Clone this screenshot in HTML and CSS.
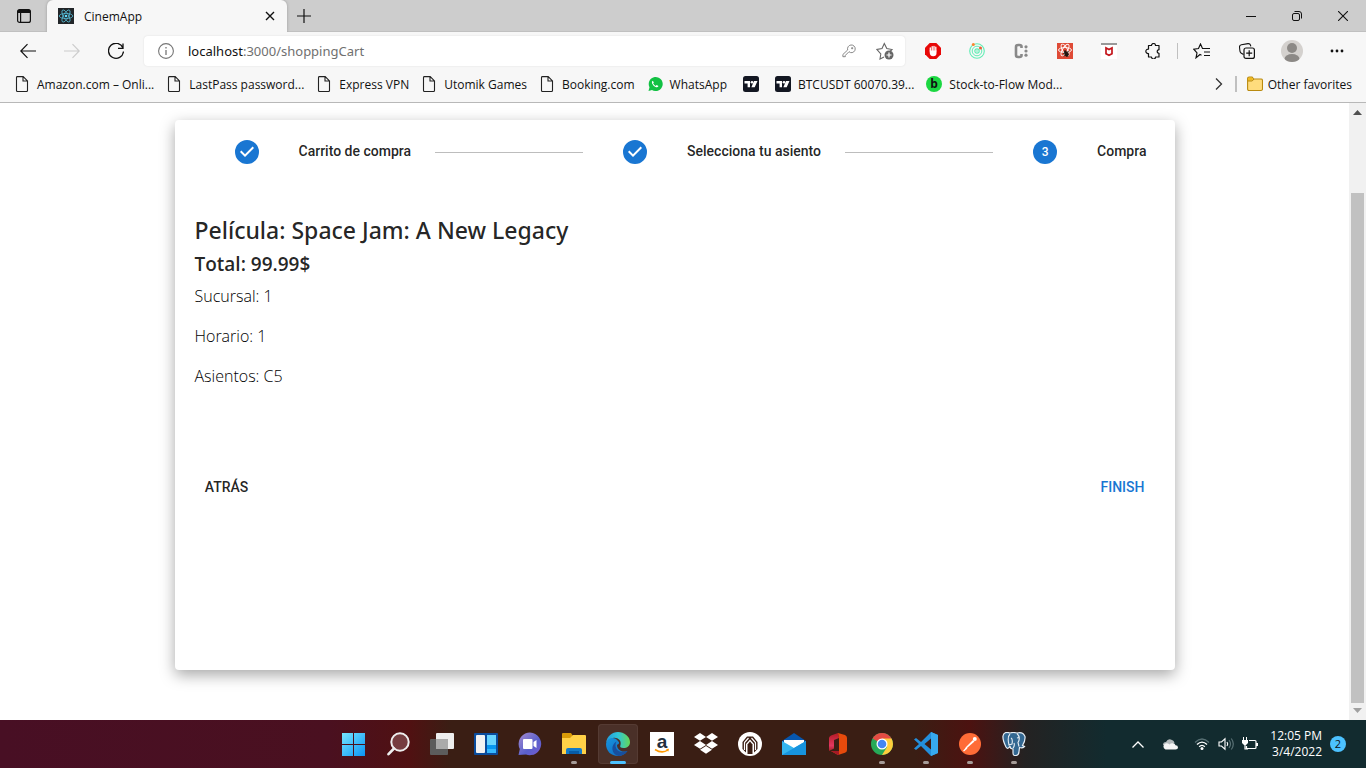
FILE: index.html
```html
<!DOCTYPE html>
<html lang="es">
<head>
<meta charset="utf-8">
<title>CinemApp</title>
<link rel="stylesheet" href="styles.css">
</head>
<body>
<svg class="defs" aria-hidden="true">
  <symbol id="page" viewBox="0 0 16 16"><path d="M2.500 .6h6.700l4.300 4.300v9.600q0 1-1 1h-9q-1 0-1-1V1.600q0-1 1-1zM9 .8V5h4.300" fill="none" stroke="#222" stroke-width="1.100"/></symbol>
  <symbol id="tv" viewBox="0 0 16 16"><rect width="16" height="16" rx="2.500" fill="#131722"/><path d="M1.500 5H7v6.200H4.600V7.400H1.500zM11 5h3.500l-2.800 6.200H8.400z" fill="#fff"/><circle cx="9" cy="6.300" r="1.300" fill="#fff"/></symbol>
  <symbol id="check" viewBox="0 0 24 24"><path d="M12 0a12 12 0 1 0 0 24 12 12 0 0 0 0-24zm-2 17l-5-5 1.400-1.400 3.600 3.600 7.600-7.600L19 8l-9 9z" fill="#1976d2"/></symbol>
</svg>
<div class="screen">
  <header class="browser">
    <div class="titlebar">
      <button class="tab-menu" aria-label="Tab actions"><svg width="16" height="16" viewBox="0 0 16 16"><path d="M1.600 5V3.500q0-2 2-2h8.800q2 0 2 2V5z" fill="#111"/><rect x="1.600" y="1.600" width="12.800" height="12.800" rx="2" fill="none" stroke="#111" stroke-width="1.200"/><path d="M4.600 5v9.500" stroke="#111" stroke-width="1.200"/></svg></button>
      <div class="tab">
        <svg width="16" height="16" viewBox="0 0 16 16"><rect width="16" height="16" fill="#222629"/><g fill="none" stroke="#55b9d3" stroke-width=".8"><ellipse cx="8" cy="8" rx="6.800" ry="2.600"/><ellipse cx="8" cy="8" rx="6.800" ry="2.600" transform="rotate(60 8 8)"/><ellipse cx="8" cy="8" rx="6.800" ry="2.600" transform="rotate(120 8 8)"/></g><circle cx="8" cy="8" r="1.300" fill="#61dafb"/></svg>
        <span class="tab-title">CinemApp</span>
        <button class="tab-close" aria-label="Close tab"><svg width="10" height="10" viewBox="0 0 10 10"><path d="M1 1l8 8M9 1L1 9" stroke="#111" stroke-width="1.400"/></svg></button>
      </div>
      <button class="new-tab" aria-label="New tab"><svg width="14" height="14" viewBox="0 0 14 14"><path d="M7 0v14M0 7h14" stroke="#111" stroke-width="1.200"/></svg></button>
      <div class="window-controls">
        <button aria-label="Minimize"><svg width="10" height="10"><path d="M0 5.500h10" stroke="#111"/></svg></button>
        <button aria-label="Restore"><svg width="10" height="10" viewBox="0 0 10 10"><rect x=".5" y="2.500" width="7" height="7" rx="1.500" fill="none" stroke="#111"/><path d="M2.500 .5H7q2.500 0 2.500 2.500v4.500" fill="none" stroke="#111"/></svg></button>
        <button aria-label="Close"><svg width="10" height="10"><path d="M0 0l10 10M10 0L0 10" stroke="#111" stroke-width="1.100"/></svg></button>
      </div>
    </div>
    <div class="toolbar">
      <nav class="history">
        <button aria-label="Back"><svg width="16" height="16" viewBox="0 0 16 16"><path d="M16 8H.8M7.500 1.200L.8 8l6.700 6.800" fill="none" stroke="#111" stroke-width="1.200"/></svg></button>
        <button aria-label="Forward" disabled><svg width="16" height="16" viewBox="0 0 16 16"><path d="M0 8h15.200M8.500 1.200L15.200 8l-6.700 6.800" fill="none" stroke="#ccc" stroke-width="1.200"/></svg></button>
        <button aria-label="Refresh"><svg width="16" height="16" viewBox="0 0 16 16"><path d="M15 5A7.500 7.500 0 1 0 15.500 8.500M15 .5V5.300h-5" fill="none" stroke="#111" stroke-width="1.300"/></svg></button>
      </nav>
      <div class="address">
        <svg width="16" height="16" viewBox="0 0 16 16"><circle cx="8" cy="8" r="7.400" fill="none" stroke="#767676" stroke-width="1.100"/><path d="M8 7v5M8 4v1.500" stroke="#767676" stroke-width="1.300"/></svg>
        <a class="url" href="#"><span class="host">localhost</span>:3000/shoppingCart</a>
        <button aria-label="Saved passwords"><svg width="14" height="14" viewBox="0 0 16 16"><path d="M8 8.800L3.800 13v1.500H1V12l5.500-5.200A4.400 4.400 0 1 1 9.700 9.800L8 8.800zM11 4.200h1.200v1.200H11z" fill="none" stroke="#777" stroke-width="1"/></svg></button>
        <button class="star" aria-label="Add to favorites"><svg width="18" height="18" viewBox="0 0 18 18"><path d="M8 15l-4 2 .8-5L1 7.500l5-.9L8.300 1.500l2.500 5.100 5.200.9-2 2" fill="none" stroke="#666" stroke-width="1.100"/><circle cx="13" cy="13" r="4.500" fill="#666"/><path d="M13 10.500v5M10.500 13h5" stroke="#fff" stroke-width="1.200"/></svg></button>
      </div>
      <div class="extensions">
        <button aria-label="Ad blocker"><svg width="16" height="16" viewBox="0 0 16 16"><path d="M4.700 0h6.600L16 4.700v6.600L11.300 16H4.700L0 11.300V4.700z" fill="#e80808"/><path d="M5.300 8V5M7.200 8V3.600M9 8V3.300M10.800 8V4.200" stroke="#fff" stroke-width="1.300" stroke-linecap="round"/><path d="M4.700 7.500h6.800v2.700q0 3-3.200 3-3.600 0-3.600-4z" fill="#fff"/></svg></button>
        <button aria-label="Orbit"><svg width="16" height="16" viewBox="0 0 16 16"><g fill="none" stroke="#61edb4"><circle cx="8" cy="8" r="7.300" stroke-width="1.100"/><circle cx="8" cy="8" r="4.800"/><circle cx="8" cy="8" r="2.200" stroke-width="1.200"/></g><circle cx="8" cy="8" r=".8" fill="#61edb4"/><circle cx="4.300" cy="1.600" r="1.500" fill="#ff852f"/><circle cx="11.500" cy="5" r="1.500" fill="#f05b37"/></svg></button>
        <button aria-label="Code tools"><svg width="16" height="16" viewBox="0 0 16 16"><path d="M8.500 5V3.500Q8.500 2 6.500 2H5Q3 2 3 4v8q0 2 2 2h1.500q2 0 2-1.500V11" fill="none" stroke="#898989" stroke-width="2.600"/><g fill="#898989"><circle cx="13" cy="3.800" r="1.600"/><circle cx="13" cy="8" r="1.600"/><circle cx="13" cy="12.200" r="1.600"/></g></svg></button>
        <button aria-label="React tools"><svg width="16" height="16" viewBox="0 0 16 16"><rect width="16" height="16" fill="#df4a36"/><g fill="none" stroke="#fff" stroke-width=".9"><ellipse cx="8" cy="7" rx="6.500" ry="2.500"/><ellipse cx="8" cy="7" rx="6.500" ry="2.500" transform="rotate(60 8 7)"/><ellipse cx="8" cy="7" rx="6.500" ry="2.500" transform="rotate(120 8 7)"/></g><path d="M7 7.500l2 .5 2.500 2v2.500L9.500 14 7.500 12z" fill="#22150f"/><path d="M6 10.500l6-2M6.500 13l5.500-1.500M8 7l3 7" stroke="#22150f" stroke-width=".8"/></svg></button>
        <button aria-label="Web protection"><svg width="16" height="16" viewBox="0 0 16 16"><rect y="1" width="16" height="15" fill="#fff"/><rect width="16" height="2" fill="#999"/><path d="M5 5v5.800l3 1.500 3-1.500V5L8 6.500z" fill="none" stroke="#c4161c" stroke-width="1.700"/></svg></button>
        <button aria-label="Extensions"><svg width="16" height="16" viewBox="0 0 16 16"><path d="M5 2.500h1.500a2 2 0 0 1 4 0H14v4.200a1.800 1.800 0 1 0 0 3.600V14h-3.500a2 2 0 0 1-4 0H3.500v-3.500a2.200 2.200 0 1 1 0-4.300V2.500z" fill="none" stroke="#111" stroke-width="1.200" stroke-linejoin="round"/></svg></button>
      </div>
      <span class="divider"></span>
      <div class="browser-tools">
        <button aria-label="Favorites"><svg width="17" height="16" viewBox="0 0 17 16"><path d="M8.500 12.300L7 11.500 3 14.800l1-5L.8 6.200l4.700-.7L7.500 1l2 4.500H17M11 9h6M11 12.500h6" fill="none" stroke="#111" stroke-width="1.150"/></svg></button>
        <button aria-label="Collections"><svg width="16" height="16" viewBox="0 0 16 16"><path d="M4.500 11.500L2 10Q.8 9 .8 7L.5 4Q.5 2 2.400 1.700L9 .6q2-.2 2.500 1.600l.3 1.200" fill="none" stroke="#111" stroke-width="1.100"/><rect x="5" y="5" width="10.400" height="10.400" rx="2" fill="#f7f7f7" stroke="#111" stroke-width="1.200"/><path d="M10.200 7.200v6M7.200 10.200h6" stroke="#111" stroke-width="1.200"/></svg></button>
        <button aria-label="Profile"><svg width="22" height="22" viewBox="0 0 22 22"><defs><clipPath id="face"><circle cx="11" cy="11" r="11"/></clipPath></defs><g clip-path="url(#face)"><rect width="22" height="22" fill="#d4d1ce"/><circle cx="11" cy="8" r="5" fill="#8c8986"/><ellipse cx="11" cy="19" rx="7.500" ry="5" fill="#8c8986"/></g></svg></button>
        <button aria-label="Settings and more"><svg width="14" height="4"><g fill="#111"><circle cx="2" cy="2" r="1.400"/><circle cx="7" cy="2" r="1.400"/><circle cx="12" cy="2" r="1.400"/></g></svg></button>
      </div>
    </div>
    <nav class="bookmarks">
      <a href="#"><svg><use href="#page"/></svg>Amazon.com – Onli...</a>
      <a href="#"><svg><use href="#page"/></svg>LastPass password...</a>
      <a href="#"><svg><use href="#page"/></svg>Express VPN</a>
      <a href="#"><svg><use href="#page"/></svg>Utomik Games</a>
      <a href="#"><svg><use href="#page"/></svg>Booking.com</a>
      <a href="#"><svg viewBox="0 0 16 16"><path d="M1.500 15l1-3.700A7 7 0 1 1 5 14z" fill="#12c143"/><path d="M5.800 4.700q-1.500.8-.7 2.700 1.300 3 4 3.800 1.700.4 2.400-1.300l-1.900-1-1 1Q6.800 9 6.100 7.300l.8-.9z" fill="#fff"/></svg>WhatsApp</a>
      <a class="icon-only" href="#" aria-label="TradingView"><svg><use href="#tv"/></svg></a>
      <a href="#"><svg><use href="#tv"/></svg>BTCUSDT 60070.39...</a>
      <a href="#"><svg viewBox="0 0 16 16"><circle cx="8" cy="8" r="8" fill="#1bd741"/><text x="8" y="12" text-anchor="middle" class="b-mark">b</text></svg>Stock-to-Flow Mod...</a>
      <button class="more" aria-label="More favorites"><svg width="8" height="12" viewBox="0 0 8 12"><path d="M1 .5L6.500 6 1 11.500" fill="none" stroke="#333" stroke-width="1.300"/></svg></button>
      <span class="divider"></span>
      <a class="folder" href="#"><svg viewBox="0 0 16 16"><path d="M.6 4V2.600q0-1.500 1.500-1.500h3L6.800 3H14q1.500 0 1.500 1.500V13q0 1.500-1.500 1.500H2Q.6 14.500.6 13z" fill="#ffdc7d" stroke="#b98a10" stroke-width="1.100"/><path d="M1 5V2.700q0-1.200 1.200-1.200h2.700L6.400 3 5 4.600z" fill="#efb920"/><path d="M1 5h4.200L7 3" fill="none" stroke="#b98a10"/></svg>Other favorites</a>
    </nav>
  </header>

  <div class="viewport">
    <main class="page">
      <section class="card">
        <ol class="stepper">
          <li><svg width="24" height="24"><use href="#check"/></svg><span>Carrito de compra</span></li>
          <li class="line" aria-hidden="true"></li>
          <li><svg width="24" height="24"><use href="#check"/></svg><span>Selecciona tu asiento</span></li>
          <li class="line" aria-hidden="true"></li>
          <li><b class="number">3</b><span>Compra</span></li>
        </ol>
        <div class="summary">
          <h1>Película: Space Jam: A New Legacy</h1>
          <h2>Total: 99.99$</h2>
          <p>Sucursal: 1</p>
          <p>Horario: 1</p>
          <p>Asientos: C5</p>
        </div>
        <div class="actions">
          <button>ATRÁS</button>
          <button class="primary">FINISH</button>
        </div>
      </section>
    </main>
    <div class="scrollbar" aria-hidden="true">
      <svg width="9" height="5"><path d="M0 5L4.500 0 9 5z" fill="#505050"/></svg>
      <span class="thumb"></span>
      <svg width="9" height="5"><path d="M0 0h9L4.500 5z" fill="#a0a0a0"/></svg>
    </div>
  </div>

  <footer class="taskbar">
    <div class="apps">
      <button aria-label="Start"><svg viewBox="0 0 24 24"><defs><linearGradient id="win" x2="1" y2="1"><stop stop-color="#76e6ff"/><stop offset="1" stop-color="#0a94f5"/></linearGradient></defs><path d="M0 1h11v11H0zM12 1h11v11H12zM0 13h11v11H0zM12 13h11v11H12z" fill="url(#win)"/></svg></button>
      <button aria-label="Search"><svg viewBox="0 0 24 24"><circle cx="14" cy="10" r="8.700" fill="#763d40" stroke="#eee" stroke-width="2"/><path d="M8 16.500l-5.500 5.700" stroke="#eee" stroke-width="2.600" stroke-linecap="round"/></svg></button>
      <button aria-label="Task view"><svg viewBox="0 0 24 24"><rect x="6" y="1" width="18" height="16" rx="1" fill="#eee"/><rect y="7" width="18" height="16" rx="1" fill="#5c5c5c"/><path d="M6 7h12v10H6z" fill="#aaa"/></svg></button>
      <button aria-label="Widgets"><svg viewBox="0 0 24 24"><rect y="1" width="24" height="22" rx="1" fill="#0a4c9d"/><rect x="2" y="3" width="9" height="18" rx="1" fill="#f2f2f2"/><path d="M13 3h9v10h-9z" fill="#68d4ff"/><path d="M13 13h9v4h-9z" fill="#0797f2"/><path d="M13 17h9v4h-9z" fill="#36b9ff"/></svg></button>
      <button aria-label="Chat"><svg viewBox="0 0 24 24"><defs><linearGradient id="chat" x2="1" y2="1"><stop stop-color="#a58bd0"/><stop offset=".6" stop-color="#5960cc"/><stop offset="1" stop-color="#775bd0"/></linearGradient></defs><path d="M.5 23l1.300-6A11.300 11.300 0 1 1 8 22.500z" fill="url(#chat)"/><rect x="5" y="7" width="9.500" height="10" rx="1" fill="#fff"/><path d="M15.500 10L18.500 8v8l-3-2z" fill="#fff"/></svg></button>
      <button class="running" aria-label="File Explorer"><svg viewBox="0 0 24 24"><path d="M0 2q0-1 1-1h8l2 3v4H0z" fill="#d99b08"/><path d="M0 6h8l3-3h12q1 0 1 1v18H0z" fill="#ffd147"/><path d="M4 22v-4q0-2 2-2h12q2 0 2 2v4z" fill="#137ac7"/><path d="M7 19h10v3H7z" fill="#075ca7"/></svg></button>
      <button class="running active" aria-label="Edge"><svg viewBox="0 0 24 24"><defs><linearGradient id="edge" x2="1"><stop stop-color="#229bdc"/><stop offset=".5" stop-color="#2fc5d8"/><stop offset="1" stop-color="#65d955"/></linearGradient><linearGradient id="wave" x2=".8" y2="1"><stop stop-color="#1594df"/><stop offset="1" stop-color="#126cc0"/></linearGradient></defs><path d="M0 11C1 4 6 0 12 0s12 4.500 12 10c0 4-3 6-6.500 6-3 0-4-1.300-3-3C16 8 11 5 7 6 3 7 1 9 0 11z" fill="url(#edge)"/><path d="M0 12c1-7 9-8 12-3 2 2 1 3-1 4 0 4 4 8 10.500 6C19 22.500 15.500 24 12 24 5 24 0 19 0 12z" fill="url(#wave)"/><path d="M10.500 9.500c-2.500 4.500 0 10 5 10.500 3 .2 4.500-.5 6-1.200C19 22.500 16 24 12.500 24 5 22 4.500 13 10.500 9.500z" fill="#174f9e"/></svg></button>
      <button aria-label="Amazon"><svg viewBox="0 0 24 24"><rect width="24" height="24" fill="#fff"/><text x="12" y="16" text-anchor="middle" class="a-mark">a</text><path d="M5 17.500q7 4.500 13 .5" fill="none" stroke="#ff9900" stroke-width="1.500"/><path d="M16 17l3-.2-.8 3z" fill="#ff9900"/></svg></button>
      <button aria-label="Dropbox"><svg viewBox="0 0 24 24"><path d="M6 1l6 3.900-6 3.900-6-3.900zM18 1l6 3.900-6 3.900-6-3.900zM6 9l6 3.900-6 3.900-6-3.900zM18 9l6 3.900-6 3.900-6-3.900zM12 14l6 3.800-6 3.900-6-3.900z" fill="#fff"/></svg></button>
      <button aria-label="Nord"><svg viewBox="0 0 24 24"><circle cx="12" cy="12" r="12" fill="#fff"/><path d="M9 4.500h6l4.500 5.500v7L16 20.500V12l-4-4.500L8 12v8.500L4.500 17v-7z" fill="#3a1e14"/><path d="M6.500 18v-7.500L10.500 6M17.500 18v-7.500L13.500 6" fill="none" stroke="#fff" stroke-width="1.200"/><path d="M9.500 22v-9.500L12 9.500l2.500 3V22z" fill="#3a1e14"/></svg></button>
      <button aria-label="Mail"><svg viewBox="0 0 24 24"><path d="M0 9L12 1l12 8v5H0z" fill="#0756ad"/><path d="M2 8h20v9H2z" fill="#fff"/><path d="M0 9l12 7 12-7v14H0z" fill="#35b5ef"/><path d="M0 23L24 9v14z" fill="#1794df"/></svg></button>
      <button aria-label="Office"><svg viewBox="0 0 24 24"><defs><linearGradient id="office" y2="1" x2="0"><stop stop-color="#b31a24"/><stop offset=".7" stop-color="#e03860"/><stop offset="1" stop-color="#a32025"/></linearGradient></defs><path d="M12 1L5 3.500Q3 4.500 3 6v13l5-2.500V8l5-2z" fill="url(#office)"/><path d="M12 1l7 2q2 .8 2 3v12q0 2-2 2.800L12 23l-7-4h8V6z" fill="#e64a0c"/><path d="M5 19h8v4h-1z" fill="#a51a27"/></svg></button>
      <button class="running" aria-label="Chrome"><svg viewBox="0 0 24 24"><circle cx="12" cy="12" r="11" fill="#26a958"/><path d="M12 12L2.500 6.500A11 11 0 0 1 21.500 6.500z" fill="#e44b43"/><path d="M12 6.500h9.500A11 11 0 0 1 12 23l5-8z" fill="#ffcd3c"/><circle cx="12" cy="12" r="5.500" fill="#fff"/><circle cx="12" cy="12" r="4.300" fill="#4285f4"/></svg></button>
      <button class="running" aria-label="Visual Studio Code"><svg viewBox="0 0 24 24"><path d="M17 0l7 3v18l-7 3L7 14l-5 4-2-1.500L5 12 0 7.500 2 6l5 4zM17 6.500L10.500 12l6.500 5.500z" fill="#238fdc"/><path d="M17 0l7 3v18l-7 3z" fill="#37a9ef"/></svg></button>
      <button class="running" aria-label="Postman"><svg viewBox="0 0 24 24"><circle cx="12" cy="12" r="11" fill="#ff6c37"/><path d="M8 15l7-7 1.500 1.500L9 16l-3 2z" fill="#fff"/><circle cx="16.800" cy="7" r="2" fill="#fff"/><path d="M5.500 19l3.500-3" stroke="#fff" stroke-width="1.200"/></svg></button>
      <button class="running" aria-label="PostgreSQL"><svg viewBox="0 0 24 24"><path d="M8 1Q2-1 1 4q-.5 4 3 11 2 3 4-1 0 3 3 3v4q0 3 3 2.500t3-4l.5-4q3 1 5-1l-2-1q3-5 2.500-9Q21-.5 15 1q-4-1-7 0z" fill="#336791" stroke="#e6edf4" stroke-width="1.200"/><path d="M8 2Q5 5 7 13l3-1q1-5-1-6M15 1.500q4 4 1 9l1 4M11 16q2-2 1-5M15 6l2-.5" fill="none" stroke="#e6edf4" stroke-width="1.100"/></svg></button>
    </div>
    <div class="tray">
      <button aria-label="Show hidden icons"><svg width="12" height="7"><path d="M.5 6.500L6 1l5.500 5.500" fill="none" stroke="#fff" stroke-width="1.300"/></svg></button>
      <button class="cloud" aria-label="OneDrive"><svg width="16" height="11" viewBox="0 0 16 11"><path d="M1 6Q1 3 4 3q2-4 6-2 2 .5 2.500 3L7 7z" fill="#b3b9bb"/><path d="M3.500 10.500a3.200 3.200 0 0 1 0-6q2-.8 4 1 1-1.500 3.500-1.300 2 .2 2.500 2 2.500 0 2.500 2.200 0 2.100-2.500 2.100z" fill="#f5f5f5"/></svg></button>
      <button class="system" aria-label="Network, volume and battery">
        <svg width="16" height="14" viewBox="0 0 16 14"><path d="M1 5.500Q8-1.500 15 5.500" fill="none" stroke="#587074" stroke-width="1.200"/><path d="M3 7.600q5-5 10 0M5.200 9.800q2.800-2.800 5.600 0" fill="none" stroke="#fff" stroke-width="1.400"/><circle cx="8" cy="11.500" r="1.500" fill="#fff"/></svg>
        <svg width="16" height="14" viewBox="0 0 16 14"><path d="M1 5h2.500L7 1.800v10.400L3.500 9H1z" fill="none" stroke="#fff" stroke-width="1.100"/><path d="M9 5q1.500 2 0 4" fill="none" stroke="#fff" stroke-width="1.200"/><path d="M11 3.200q3 3.800 0 7.600M13.300 1.500q4 5.500 0 11" fill="none" stroke="#587074" stroke-width="1.200"/></svg>
        <svg width="16" height="14" viewBox="0 0 16 14"><path d="M7 3.500h6q1 0 1 1v6q0 1-1 1H4.500V9M3 6v6h3" fill="none" stroke="#fff" stroke-width="1.200"/><path d="M14 6h2v3h-2zM0 3h6v3L4 8H2L0 6zM1 0h1v3H1zM4 0h1v3H4z" fill="#fff"/></svg>
      </button>
      <button class="clock"><span class="time">12:05 PM<br>3/4/2022</span><span class="count">2</span></button>
    </div>
  </footer>
</div>
</body>
</html>
```
FILE: styles.css
```css
* { box-sizing: border-box; }
body { margin: 0; font-family: "Open Sans", "Noto Sans", sans-serif; font-size: 12px; color: #111; }
button { border: 0; margin: 0; padding: 0; background: none; color: inherit; font: inherit; display: flex; align-items: center; justify-content: center; }
a { color: inherit; text-decoration: none; }
svg { display: block; flex: none; }
.defs { position: absolute; width: 0; height: 0; }
.screen { min-height: 100vh; display: flex; flex-direction: column; background: #fff; }

.browser { background: #f7f7f7; border-bottom: 1px solid #b8b8b8; }
.titlebar { display: flex; height: 32px; background: #cdcdcd; border-bottom: 1px solid #c0c0c0; }
.tab-menu { width: 47px; }
.tab { display: flex; align-items: center; gap: 10px; width: 240px; height: 32px; padding: 0 11px; background: #f7f7f7; border-radius: 6px 6px 0 0; box-shadow: 0 0 3px #999; clip-path: inset(0 -4px 0 -4px); }
.tab-title { flex: 1; }
.tab-close { width: 12px; height: 20px; }
.new-tab { width: 34px; }
.window-controls { display: flex; margin-left: auto; }
.window-controls button { width: 46px; }

.toolbar { display: flex; align-items: center; height: 38px; }
.history { display: flex; padding-left: 6px; width: 144px; }
.history button { width: 44px; height: 32px; }
.address { flex: 1; display: flex; align-items: center; height: 30px; padding: 0 11px 0 14px; gap: 14px; background: #fff; border-radius: 4px; box-shadow: 0 0 2px #ddd; }
.url { flex: 1; color: #707070; font-family: "Noto Sans", sans-serif; font-size: 13px; }
.host { color: #111; }
.star { margin-left: 6px; }
.extensions { display: flex; padding-left: 6px; }
.extensions button { width: 44px; height: 32px; }
.divider { width: 1px; height: 16px; background: #c0c0c0; }
.toolbar .divider { margin-left: 2px; }
.browser-tools { display: flex; padding-left: 1px; padding-right: 7px; }
.browser-tools button { width: 45px; height: 32px; }

.bookmarks { display: flex; align-items: center; height: 32px; padding: 0 14px 4px; gap: 12px; white-space: nowrap; }
.bookmarks a { display: flex; align-items: center; gap: 7px; }
.bookmarks .icon-only { padding: 0 4px; }
.bookmarks a svg { width: 16px; height: 16px; }
.bookmarks .more { margin-left: auto; width: 8px; }
.bookmarks .divider { width: 2px; }
.bookmarks .folder { margin-left: -2px; gap: 5px; }
.b-mark { font: 700 12px "Open Sans", sans-serif; fill: #111; }

.viewport { flex: 1; display: flex; }
.page { flex: 1; padding: 17px 24px 50px; }
.card { max-width: 1000px; min-height: 550px; margin: 0 auto; padding: 20px; border-radius: 4px; background: #fff; color: rgba(0, 0, 0, .87); box-shadow: 0 5px 15px rgba(0, 0, 0, .35); }
.stepper { display: flex; align-items: center; list-style: none; margin: 0; padding: 0 8px 0 40px; font: 500 14px/24px Roboto, sans-serif; }
.stepper li { display: flex; align-items: center; gap: 40px; height: 24px; }
.stepper span { padding-bottom: 2px; }
.stepper .line { flex: 1; height: 1px; margin: 0 40px 0 24px; background: #bdbdbd; }
.number { width: 24px; height: 24px; border-radius: 50%; background: #1976d2; color: #fff; font-size: 12px; font-weight: 500; text-align: center; }
.summary { padding-top: 50px; }
h1 { margin: 0 0 4px; font-family: "Noto Sans", sans-serif; font-size: 23px; line-height: 32px; font-weight: 500; }
h2 { margin: 0 0 6px; font-size: 19px; line-height: 28px; font-weight: 600; }
p { margin: 0 0 16px; color: #000; font-size: 16px; line-height: 24px; font-weight: 300; }
.actions { display: flex; justify-content: space-between; padding-top: 65px; font: 500 14px/24px Roboto, sans-serif; }
.actions button { min-width: 64px; padding: 6px 8px; }
.primary { color: #1976d2; }

.scrollbar { display: flex; flex-direction: column; align-items: center; width: 17px; padding: 7px 0; background: #f1f1f1; }
.thumb { flex: 1; width: 13px; margin: 78px 0 5px; background: #c1c1c1; }

.taskbar { display: grid; grid-template-columns: 1fr auto 1fr; height: 48px; padding-left: 2px; color: #fff; background: linear-gradient(90deg, #480f24 0, #4a1020 24%, #501112 30%, #3a1e14 33%, #3a1e14 67%, #4c1210 71%, #242222 75%, #122b2f 81%); }
.apps { grid-column: 2; display: flex; align-items: center; gap: 4px; }
.apps button { position: relative; width: 40px; height: 40px; border-radius: 4px; }
.apps svg { width: 24px; height: 24px; }
.running::after { content: ""; position: absolute; bottom: 0; left: 17px; width: 6px; height: 3px; border-radius: 2px; background: #a69c98; }
.apps .active { background: #4a3028; box-shadow: inset 0 0 0 1px #553b33; }
.active::after { left: 12px; width: 16px; background: #4cc2ff; }
.a-mark { font: 700 19px/1 "Liberation Sans", sans-serif; fill: #222f3e; }
.tray { display: flex; align-items: center; justify-content: flex-end; padding-right: 20px; }
.cloud { margin-left: 18px; }
.system { gap: 8px; margin: 0 12px 0 16px; }
.clock { gap: 8px; line-height: 16px; text-align: right; }
.count { width: 16px; height: 16px; border-radius: 50%; background: #4cc2ff; color: #111; font-size: 11px; text-align: center; }
```
